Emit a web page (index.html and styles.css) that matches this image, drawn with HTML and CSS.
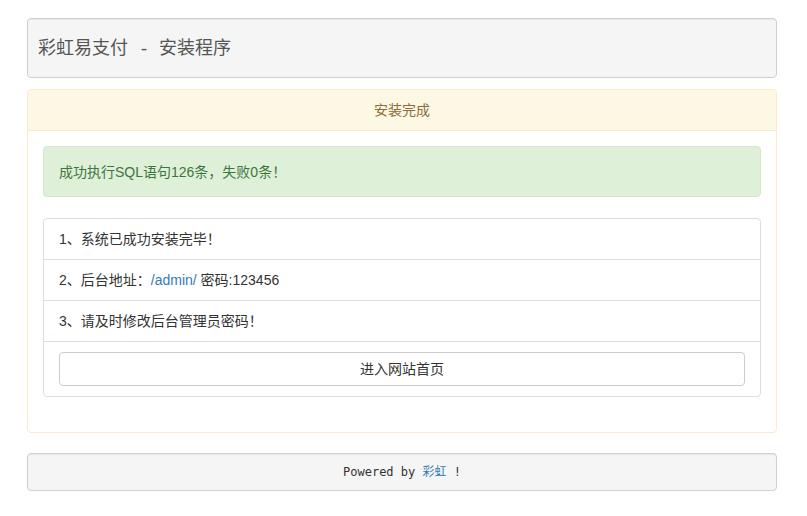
FILE: index.html
```html
<!DOCTYPE html>
<html lang="zh-CN">
<head>
<meta charset="utf-8">
<title>彩虹易支付 - 安装程序</title>
<link rel="stylesheet" href="styles.css">
</head>
<body>
<div class="container">
  <div class="well header">彩虹易支付<span class="sep">-</span>安装程序</div>
  <div class="panel">
    <div class="panel-heading">安装完成</div>
    <div class="panel-body">
      <div class="alert">成功执行SQL语句126条，失败0条！</div>
      <ul class="list-group">
        <li class="list-item">1、系统已成功安装完毕！</li>
        <li class="list-item">2、后台地址：<a href="#">/admin/</a> 密码:123456</li>
        <li class="list-item">3、请及时修改后台管理员密码！</li>
        <li class="list-item"><a class="btn" href="#">进入网站首页</a></li>
      </ul>
    </div>
  </div>
  <div class="well footer">Powered by <a href="#">彩虹</a> !</div>
</div>
</body>
</html>
```
FILE: styles.css
```css
* { box-sizing: border-box; }
html, body { margin: 0; padding: 0; background: #fff; }
body {
  font-family: "Liberation Sans", Arial, "Noto Sans CJK SC", sans-serif;
  font-size: 14px;
  line-height: 20px;
  color: #333;
}
a { color: #337ab7; text-decoration: none; }
.container {
  width: 750px;
  margin: 18px 0 0 27px;
}
.well {
  background: #f5f5f5;
  border: 1px solid #cfcfcf;
  border-radius: 4px;
  box-shadow: inset 0 1px 1px rgba(0,0,0,0.05);
}
.header {
  padding: 19px 10px;
  font-family: "Liberation Serif", "Noto Sans CJK SC", serif;
  font-size: 18px;
  line-height: 20px;
  color: #555;
  margin-bottom: 11px;
}
.sep { padding: 0 12px 0 13px; }
.panel {
  border: 1px solid #faebcc;
  border-radius: 4px;
  margin-bottom: 20px;
  background: #fff;
}
.panel-heading {
  background: #fcf8e3;
  color: #8a6d3b;
  border-bottom: 1px solid #faebcc;
  padding: 10px 15px;
  text-align: center;
  border-radius: 3px 3px 0 0;
}
.panel-body { padding: 15px; }
.alert {
  background: #dff0d8;
  border: 1px solid #d6e9c6;
  color: #3c763d;
  border-radius: 4px;
  padding: 15px;
  height: 51px;
  margin-bottom: 21px;
}
.list-group {
  list-style: none;
  margin: 0 0 20px;
  padding: 0;
  border: 1px solid #ddd;
  border-radius: 4px;
}
.list-item {
  padding: 10px 15px;
  border-top: 1px solid #ddd;
}
.list-item:first-child { border-top: 0; }
.btn {
  display: block;
  height: 34px;
  line-height: 20px;
  padding: 6px 12px;
  border: 1px solid #ccc;
  border-radius: 4px;
  background: #fff;
  color: #333;
  text-align: center;
}
.footer {
  padding: 9px 10px;
  text-align: center;
  font-family: "DejaVu Sans Mono", "Noto Sans CJK SC", monospace;
  font-size: 12px;
  line-height: 18px;
  color: #333;
}
```
